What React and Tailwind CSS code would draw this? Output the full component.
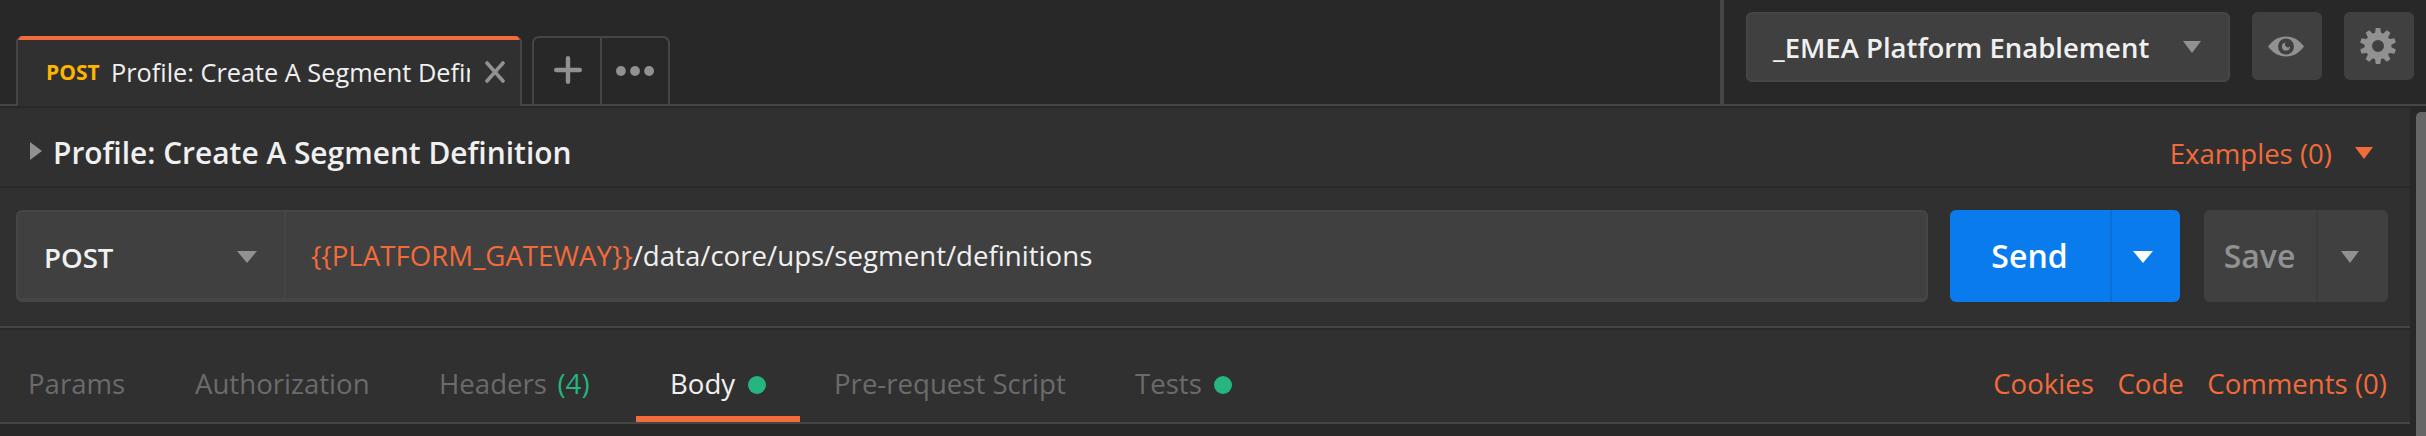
import React from "react";

function Caret({ className }) {
  return (
    <svg viewBox="0 0 20 12" preserveAspectRatio="none" className={className} fill="currentColor">
      <path d="M0 0H20L10 12Z" />
    </svg>
  );
}

function EyeIcon() {
  return (
    <svg width="36" height="22" viewBox="0 0 36 22" className="mt-[2px] mr-[2px] block">
      <path d="M0 10.500C5 4 10.500 .5 18 .5S31 4 36 10.500C31 17 25.500 20.500 18 20.500S5 17 0 10.500Z" fill="#919191" />
      <circle cx="18" cy="10.500" r="8" fill="#404040" />
      <path d="M17.500 6.600A4 4 0 1 0 22 10.500A3 3 0 0 1 17.500 6.600Z" fill="#919191" />
    </svg>
  );
}

const TEETH = [0, 36, 72, 108, 144, 180, 216, 252, 288, 324];

function GearIcon() {
  return (
    <svg width="36" height="36" viewBox="-18 -18 36 36" className="mr-[2px] block" fill="#919191">
      <circle r="9.700" fill="none" stroke="#919191" strokeWidth="7.400" />
      {TEETH.map((a) => (
        <path key={a} d="M-3.200 -12L-2.200 -18H2.200L3.200 -12Z" transform={`rotate(${a})`} />
      ))}
    </svg>
  );
}

function TabBar() {
  return (
    <div className="flex h-[104px]">
      <div className="relative mt-[36px] ml-[16px] flex h-[70px] w-[506px] overflow-hidden rounded-t-[6px] border-x-2 border-[#464646] bg-[#303030]">
        <div className="flex w-full border-t-4 border-[#f26b3a] pt-[15px] pl-[28px] leading-[34px]">
          <span className="w-[65px] shrink-0 text-[21px] font-bold text-[#ffb400]">POST</span>
          <span className="w-[359px] shrink-0 overflow-hidden text-[25.300px] whitespace-nowrap text-[#f0f0f0]">
            Profile: Create A Segment Definition
          </span>
          <svg width="20" height="22" viewBox="0 0 20 22" className="mt-[6px] ml-[15px] shrink-0" stroke="#919191" strokeWidth="3.600" strokeLinecap="round">
            <path d="M2 2L18 20M18 2L2 20" />
          </svg>
        </div>
      </div>
      <div className="mt-[36px] ml-[10px] flex h-[68px] w-[138px] rounded-t-[7px] border-2 border-b-0 border-[#464646]">
        <div className="flex w-[68px] justify-center border-r-2 border-[#464646] pt-[18px] pl-[2px]">
          <svg width="28" height="28" viewBox="0 0 28 28" stroke="#919191" strokeWidth="4.400" strokeLinecap="round">
            <path d="M14 2.200V25.800M2.200 14H25.800" />
          </svg>
        </div>
        <div className="flex grow justify-center pt-[28px]">
          <svg width="38" height="10" viewBox="0 0 38 10" fill="#919191">
            <circle cx="4.900" cy="5" r="4.900" />
            <circle cx="19" cy="5" r="4.900" />
            <circle cx="33.100" cy="5" r="4.900" />
          </svg>
        </div>
      </div>
      <div className="ml-auto flex w-[706px] border-l-4 border-[#464646] pt-[12px] pl-[22px]">
        <div className="flex h-[70px] w-[484px] items-center justify-between rounded-[6px] border-2 border-[#464646] bg-[#404040] pr-[27px] pl-[25px] text-[27.500px] font-semibold text-[#f0f0f0]">
          <span className="pt-[2px] whitespace-nowrap">_EMEA Platform Enablement</span>
          <Caret className="h-[12px] w-[18px] text-[#919191]" />
        </div>
        <div className="ml-[22px] flex h-[68px] w-[70px] items-center justify-center rounded-[6px] bg-[#404040]">
          <EyeIcon />
        </div>
        <div className="ml-[22px] flex h-[68px] w-[70px] items-center justify-center rounded-[6px] bg-[#404040]">
          <GearIcon />
        </div>
      </div>
    </div>
  );
}

function TitleRow() {
  return (
    <div className="flex h-[80px] items-center border-b-2 border-[#282828] pt-[8px] pl-[30px] leading-[38px]">
      <svg width="12" height="18" viewBox="0 0 12 18" fill="#919191">
        <path d="M0 0L12 9L0 18Z" />
      </svg>
      <span className="ml-[11px] pt-[4px] text-[29.900px] font-semibold text-[#f0f0f0]">Profile: Create A Segment Definition</span>
      <div className="mr-[37px] ml-auto flex items-center pt-[4px] text-[27.600px] text-[#f26b3a]">
        <span>Examples (0)</span>
        <Caret className="ml-[23px] h-[12px] w-[18px]" />
      </div>
    </div>
  );
}

function RequestRow() {
  return (
    <div className="flex h-[140px] border-b-2 border-[#464646] pt-[22px] pl-[16px] text-[27.600px]">
      <div className="flex h-[92px] w-[1912px] rounded-[6px] border-2 border-b-4 border-[#464646] bg-[#404040] leading-[38px] text-[#f0f0f0]">
        <div className="flex w-[268px] items-center justify-between border-r-2 border-[#464646] pr-[27px] pl-[26px]">
          <span className="pt-[4px] font-semibold">POST</span>
          <Caret className="mt-[3px] h-[12px] w-[20px] text-[#919191]" />
        </div>
        <div className="flex items-center pl-[25px] text-[27.650px]">
          <span className="text-[#f26b3a]">{"{{PLATFORM_GATEWAY}}"}</span>
          <span>/data/core/ups/segment/definitions</span>
        </div>
      </div>
      <div className="ml-[22px] flex h-[92px] w-[230px] overflow-hidden rounded-[6px] bg-[#097bed] text-[32px] font-semibold text-white">
        <div className="flex w-[162px] items-center justify-center border-r-2 border-[#0a70d6] pr-[1px]">Send</div>
        <div className="flex grow items-center pt-[2px] pl-[21px]">
          <Caret className="h-[12px] w-[20px]" />
        </div>
      </div>
      <div className="ml-[24px] flex h-[92px] w-[184px] overflow-hidden rounded-[6px] bg-[#404040] text-[32px] font-semibold text-[#919191]">
        <div className="flex w-[114px] items-center justify-center border-r-2 border-[#3a3a3a] pr-[1px]">Save</div>
        <div className="flex grow items-center pt-[2px] pl-[23px]">
          <Caret className="h-[12px] w-[18px]" />
        </div>
      </div>
    </div>
  );
}

function Dot() {
  return <span className="mt-[2px] ml-[12.500px] h-[18px] w-[18px] rounded-full bg-[#26b47f]" />;
}

function SectionTabs() {
  return (
    <div className="flex h-[96px] border-t-2 border-b-2 border-t-[#282828] border-b-[#464646] pl-[28px] text-[27.600px] text-[#6b6b6b]">
      <div className="flex w-[167px] items-center pt-[16px]">Params</div>
      <div className="flex w-[244px] items-center pt-[16px]">Authorization</div>
      <div className="flex w-[197px] items-center pt-[16px]">
        Headers<span className="ml-[10.500px] text-[#26b47f]">(4)</span>
      </div>
      <div className="flex w-[164px] items-center border-b-[6px] border-[#f26b3a] pt-[22px] pl-[34px] text-[#f0f0f0]">
        Body
        <Dot />
      </div>
      <div className="flex w-[335px] items-center pt-[16px] pl-[34px]">Pre-request Script</div>
      <div className="flex items-center pt-[16px]">
        Tests
        <Dot />
      </div>
      <div className="mr-[23px] ml-auto flex items-center gap-[23.500px] pt-[16px] text-[#f26b3a]">
        <span>Cookies</span>
        <span>Code</span>
        <span>Comments (0)</span>
      </div>
    </div>
  );
}

export default function App() {
  return (
    <div className="h-[436px] w-[2426px] overflow-hidden bg-[#282828] font-['Open_Sans','Noto_Sans',sans-serif]">
      <TabBar />
      <div className="flex h-[332px] border-t-2 border-[#464646]">
        <div className="w-[2410px] pt-[2px]">
          <div className="h-[316px] bg-[#303030]">
            <TitleRow />
            <RequestRow />
            <SectionTabs />
          </div>
        </div>
        <div className="mt-[6px] ml-auto w-[10px] rounded-tl-[5px] bg-[#666666]" />
      </div>
    </div>
  );
}
